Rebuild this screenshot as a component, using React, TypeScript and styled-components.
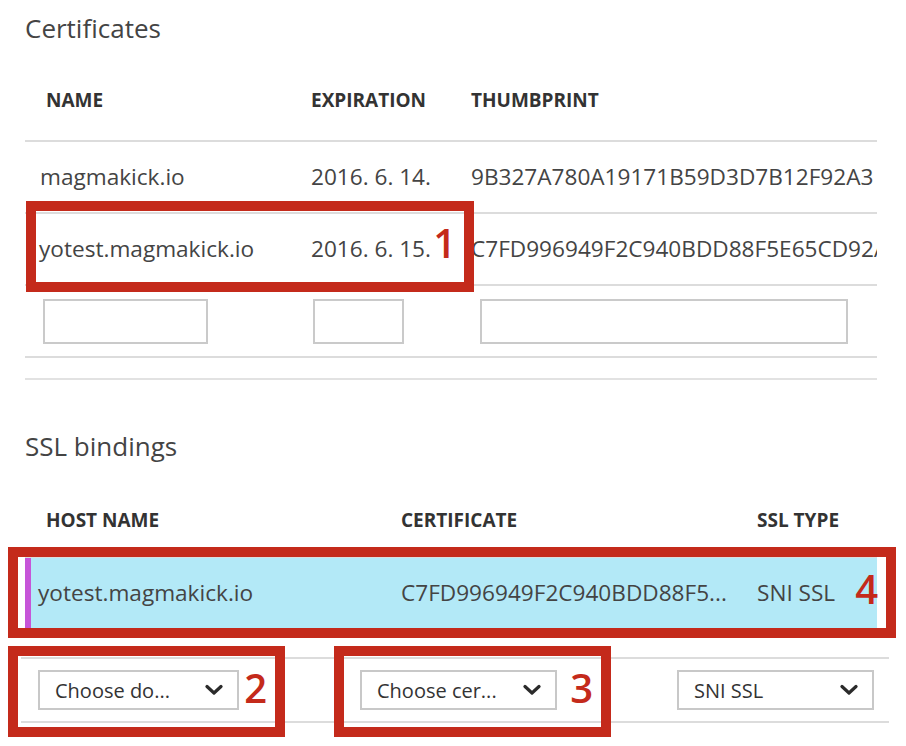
import React from "react";
import styled, { createGlobalStyle } from "styled-components";

const GlobalStyle = createGlobalStyle`
  html, body {
    margin: 0;
    padding: 0;
    background: #ffffff;
  }
  body {
    font-family: "Open Sans", "Noto Sans", sans-serif;
    color: #444;
  }
`;

const Page = styled.div`
  position: relative;
  width: 906px;
  height: 746px;
  box-sizing: border-box;
  padding: 11px 29px 0 25px;
  overflow: hidden;
  background: #fff;
`;

const SectionTitle = styled.h2<{ $gap: number }>`
  margin: ${(p) => p.$gap}px 0 0;
  font-size: 26px;
  font-weight: 400;
  line-height: 34px;
  color: #444;
`;

const HeaderRow = styled.div<{ $cols: string; $top: number; $bottom: number }>`
  display: grid;
  grid-template-columns: ${(p) => p.$cols};
  padding: ${(p) => p.$top}px 0 ${(p) => p.$bottom}px;
  border-bottom: 2px solid #dcdcdc;
`;

const HeaderCell = styled.div<{ $pad?: number }>`
  padding-left: ${(p) => p.$pad ?? 0}px;
  font-size: 19px;
  font-weight: 700;
  line-height: 20px;
  color: #333;
  white-space: nowrap;
`;

const DataRow = styled.div<{ $cols: string }>`
  display: grid;
  grid-template-columns: ${(p) => p.$cols};
  align-items: center;
  height: 70px;
  border-bottom: 2px solid #dcdcdc;
`;

const SelectedRow = styled.div<{ $cols: string }>`
  display: grid;
  grid-template-columns: ${(p) => p.$cols};
  align-items: center;
  height: 70px;
  background: #b3e9f7;
  box-shadow: inset 6px 0 0 #c655d8;
`;

const Cell = styled.div<{ $pad?: number }>`
  padding-left: ${(p) => p.$pad ?? 0}px;
  font-size: 22.6px;
  line-height: 30px;
  color: #444;
  white-space: nowrap;
  overflow: hidden;
  min-width: 0;
`;

const InputCell = styled.div<{ $pad: number }>`
  padding-left: ${(p) => p.$pad}px;
  display: flex;
`;

const TextBox = styled.input<{ $w: number }>`
  box-sizing: border-box;
  width: ${(p) => p.$w}px;
  height: 45px;
  border: 2px solid #cacaca;
  border-radius: 0;
  background: #fff;
  padding: 0 10px;
  font-family: inherit;
  font-size: 19px;
  outline: none;
`;

const Divider = styled.div`
  margin-top: 20px;
  border-top: 2px solid #e2e2e2;
`;

const DropdownRow = styled.div`
  display: grid;
  grid-template-columns: 322px 317px 1fr;
  align-items: center;
  height: 62px;
  margin: 29px -12px 0 -4px;
  border-top: 2px solid #dcdcdc;
  border-bottom: 2px solid #dcdcdc;
`;

const DropdownCell = styled.div`
  padding-left: 17px;
  display: flex;
`;

const Dropdown = styled.div<{ $w: number }>`
  box-sizing: border-box;
  width: ${(p) => p.$w}px;
  height: 40px;
  border: 2px solid #c8c8c8;
  background: #fff;
  display: flex;
  align-items: center;
  justify-content: space-between;
  padding: 0 14px 0 15px;
  font-size: 20px;
  color: #333;
  white-space: nowrap;
`;

const Chevron = () => (
  <svg width="18" height="12" viewBox="0 0 18 12" aria-hidden="true">
    <polyline
      points="2,2.5 9,9 16,2.5"
      fill="none"
      stroke="#2b2b2b"
      strokeWidth="3.2"
      strokeLinecap="round"
      strokeLinejoin="round"
    />
  </svg>
);

const Callout = styled.div<{ $x: number; $y: number; $w: number; $h: number }>`
  position: absolute;
  left: ${(p) => p.$x}px;
  top: ${(p) => p.$y}px;
  width: ${(p) => p.$w}px;
  height: ${(p) => p.$h}px;
  box-sizing: border-box;
  border: 10px solid #c42a1b;
  display: flex;
  align-items: center;
  justify-content: flex-end;
  padding: 0 8px 8px 0;
  pointer-events: none;
`;

const CalloutNumber = styled.span`
  font-family: "Open Sans", "Noto Sans", sans-serif;
  font-size: 40px;
  font-weight: 600;
  line-height: 40px;
  color: #c42a1b;
`;

const CERT_COLS = "286px 160px 406px";
const SSL_COLS = "376px 356px 1fr";

const callouts = [
  { n: "1", x: 26, y: 201, w: 448, h: 91 },
  { n: "4", x: 8, y: 547, w: 888, h: 91 },
  { n: "2", x: 8, y: 646, w: 277, h: 91 },
  { n: "3", x: 334, y: 646, w: 277, h: 91 },
];

export default function App() {
  return (
    <>
      <GlobalStyle />
      <Page>
        <SectionTitle $gap={0}>Certificates</SectionTitle>
        <HeaderRow $cols={CERT_COLS} $top={45} $bottom={30}>
          <HeaderCell $pad={21}>NAME</HeaderCell>
          <HeaderCell>EXPIRATION</HeaderCell>
          <HeaderCell>THUMBPRINT</HeaderCell>
        </HeaderRow>
        <DataRow $cols={CERT_COLS}>
          <Cell $pad={15}>magmakick.io</Cell>
          <Cell>2016. 6. 14.</Cell>
          <Cell>9B327A780A19171B59D3D7B12F92A3</Cell>
        </DataRow>
        <DataRow $cols={CERT_COLS}>
          <Cell $pad={14}>yotest.magmakick.io</Cell>
          <Cell>2016. 6. 15.</Cell>
          <Cell>C7FD996949F2C940BDD88F5E65CD92A3</Cell>
        </DataRow>
        <DataRow $cols={CERT_COLS}>
          <InputCell $pad={18}>
            <TextBox $w={165} />
          </InputCell>
          <InputCell $pad={2}>
            <TextBox $w={91} />
          </InputCell>
          <InputCell $pad={9}>
            <TextBox $w={368} />
          </InputCell>
        </DataRow>
        <Divider />

        <SectionTitle $gap={49}>SSL bindings</SectionTitle>
        <HeaderRow $cols={SSL_COLS} $top={47} $bottom={26}>
          <HeaderCell $pad={21}>HOST NAME</HeaderCell>
          <HeaderCell>CERTIFICATE</HeaderCell>
          <HeaderCell>SSL TYPE</HeaderCell>
        </HeaderRow>
        <SelectedRow $cols={SSL_COLS}>
          <Cell $pad={13}>yotest.magmakick.io</Cell>
          <Cell>C7FD996949F2C940BDD88F5...</Cell>
          <Cell>SNI SSL</Cell>
        </SelectedRow>
        <DropdownRow>
          <DropdownCell>
            <Dropdown $w={201}>
              <span>Choose do...</span>
              <Chevron />
            </Dropdown>
          </DropdownCell>
          <DropdownCell>
            <Dropdown $w={197}>
              <span>Choose cer...</span>
              <Chevron />
            </Dropdown>
          </DropdownCell>
          <DropdownCell>
            <Dropdown $w={197}>
              <span>SNI SSL</span>
              <Chevron />
            </Dropdown>
          </DropdownCell>
        </DropdownRow>

        {callouts.map((c) => (
          <Callout key={c.n} $x={c.x} $y={c.y} $w={c.w} $h={c.h}>
            <CalloutNumber>{c.n}</CalloutNumber>
          </Callout>
        ))}
      </Page>
    </>
  );
}
